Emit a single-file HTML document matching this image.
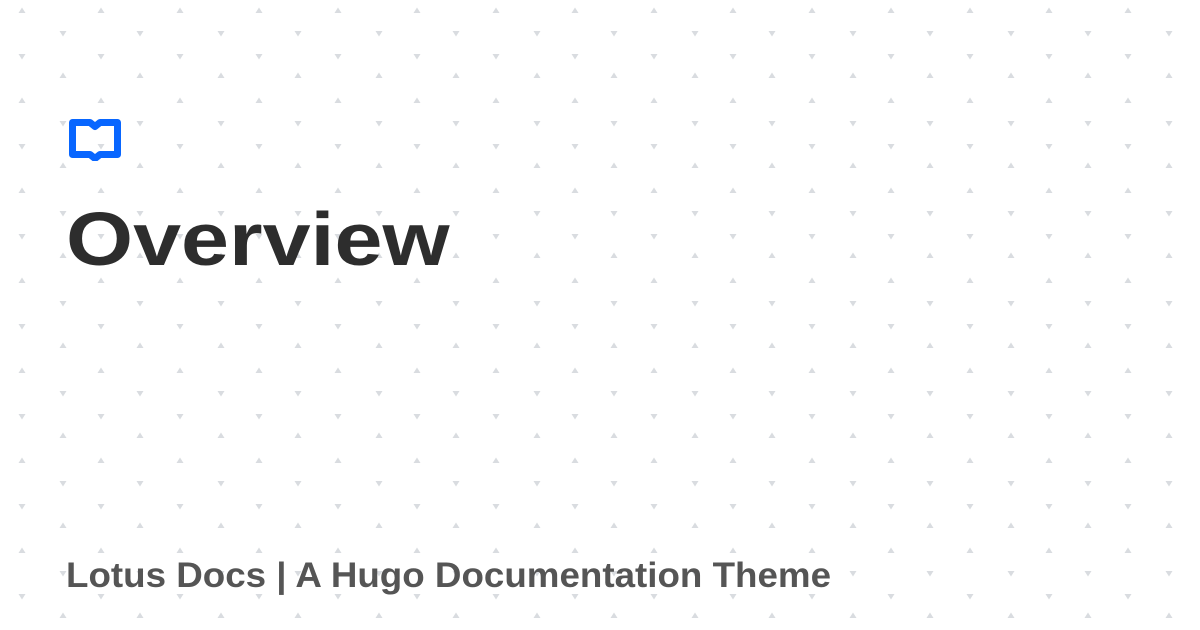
<!DOCTYPE html>
<html><head><meta charset="utf-8"><style>
html,body{margin:0;padding:0}
body{width:1200px;height:630px;overflow:hidden;background:#fff;position:relative;font-family:"Liberation Sans",sans-serif}
svg.bg{position:absolute;left:0;top:0}
.t{position:absolute;left:66px;top:202px;font-size:75px;font-weight:bold;color:#2d2d2d;line-height:1;transform-origin:0 0;transform:scaleX(1.15);white-space:nowrap}
.s{position:absolute;left:66px;top:558px;font-size:35px;font-weight:bold;color:#555;line-height:1;white-space:nowrap;transform-origin:0 0;transform:scaleX(1.05)}
</style></head><body>
<svg class="bg" width="1200" height="630">
<defs>
<pattern id="p" width="158" height="90" patternUnits="userSpaceOnUse" x="0" y="0">
<g fill="#d9dce0">
<path d="M18.5 13l3.5-5.5 3.5 5.5z"/>
<path d="M59.5 31l3.5 5.5 3.5-5.5z"/>
<path d="M97.5 13l3.5-5.5 3.5 5.5z"/>
<path d="M136.5 31l3.5 5.5 3.5-5.5z"/>
<path d="M59.5 78l3.5-5.5 3.5 5.5z"/>
<path d="M136.5 78l3.5-5.5 3.5 5.5z"/>
<path d="M18.5 54l3.5 5.5 3.5-5.5z"/>
<path d="M97.5 54l3.5 5.5 3.5-5.5z"/>
</g>
</pattern>
</defs>
<rect width="1200" height="630" fill="url(#p)"/>
</svg>
<svg style="position:absolute;left:69px;top:119px" width="52" height="42" viewBox="0 0 52 42">
<path d="M3.5 3.5H21L26 7.5L31 3.5H48.5V35.5H31L26 39.5L21 35.5H3.5Z" fill="none" stroke="#0866ff" stroke-width="7" stroke-linejoin="round"/>
</svg>
<div class="t">Overview</div>
<div class="s">Lotus Docs | A Hugo Documentation Theme</div>
</body></html>
